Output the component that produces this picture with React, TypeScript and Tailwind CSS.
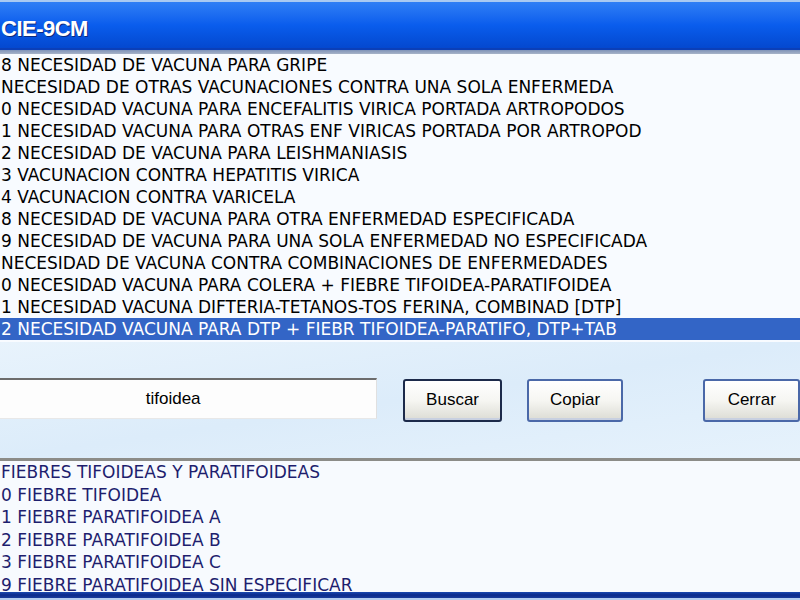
import React from 'react'

const codes = [
  '8 NECESIDAD DE VACUNA PARA GRIPE',
  'NECESIDAD DE OTRAS VACUNACIONES CONTRA UNA SOLA ENFERMEDA',
  '0 NECESIDAD VACUNA PARA ENCEFALITIS VIRICA PORTADA ARTROPODOS',
  '1 NECESIDAD VACUNA PARA OTRAS ENF VIRICAS PORTADA POR ARTROPOD',
  '2 NECESIDAD DE VACUNA PARA LEISHMANIASIS',
  '3 VACUNACION CONTRA HEPATITIS VIRICA',
  '4 VACUNACION CONTRA VARICELA',
  '8 NECESIDAD DE VACUNA PARA OTRA ENFERMEDAD ESPECIFICADA',
  '9 NECESIDAD DE VACUNA PARA UNA SOLA ENFERMEDAD NO ESPECIFICADA',
  'NECESIDAD DE VACUNA CONTRA COMBINACIONES DE ENFERMEDADES',
  '0 NECESIDAD VACUNA PARA COLERA + FIEBRE TIFOIDEA-PARATIFOIDEA',
  '1 NECESIDAD VACUNA DIFTERIA-TETANOS-TOS FERINA, COMBINAD [DTP]',
  '2 NECESIDAD VACUNA PARA DTP + FIEBR TIFOIDEA-PARATIFO, DTP+TAB',
]

const results = [
  'FIEBRES TIFOIDEAS Y PARATIFOIDEAS',
  '0 FIEBRE TIFOIDEA',
  '1 FIEBRE PARATIFOIDEA A',
  '2 FIEBRE PARATIFOIDEA B',
  '3 FIEBRE PARATIFOIDEA C',
  '9 FIEBRE PARATIFOIDEA SIN ESPECIFICAR',
]

function XpButton({ label, focused, className }: { label: string; focused?: boolean; className: string }) {
  return (
    <button
      className={`h-[43px] rounded-[3px] border-2 bg-gradient-to-b from-white via-[#f6f6f2] to-[#dcdcd4] text-[17px] text-black font-['Liberation_Sans',sans-serif] shadow-[inset_0_-2px_0_#c8d0e0] ${
        focused ? 'border-[#1c2a4a]' : 'border-[#4a68a8]'
      } ${className}`}
    >
      {label}
    </button>
  )
}

export default function App() {
  return (
    <div className="w-[800px] h-[600px] overflow-hidden flex flex-col bg-[#e4f0fb] font-['DejaVu_Sans','Liberation_Sans',sans-serif]">
      <div className="h-[2px] bg-[#a9c9f2]" />
      <div className="h-[48px] flex items-center pt-[8px] bg-gradient-to-b from-[#2f7ef5] via-[#0a5ded] to-[#0448cf] border-b-2 border-[#0b3fb8]">
        <span className="pl-[1px] font-['Liberation_Sans',sans-serif] font-bold text-[22px] leading-none tracking-[-0.5px] text-white [text-shadow:1px_1px_0_#0a2a80]">
          CIE-9CM
        </span>
      </div>
      <div className="h-[4px] bg-gradient-to-b from-[#7f93b8] to-[#a7b3c8]" />

      <div className="h-[288px] bg-[#f8fbff] text-[17px] text-black">
        {codes.map((c, i) => (
          <div
            key={i}
            className={`h-[22px] leading-[22px] pl-[1px] whitespace-nowrap ${
              i === codes.length - 1 ? 'bg-[#3365c6] text-white' : ''
            }`}
          >
            {c}
          </div>
        ))}
      </div>

      <div className="h-[116px] flex items-center bg-gradient-to-br from-[#e8f3fc] via-[#dcecfa] to-[#e6f2fc]">
        <div className="flex items-center w-full">
          <div className="w-[379px] h-[41px] -mt-[4px] bg-[#fdfdfd] border-t-2 border-[#6c6c6c] border-r border-b border-r-[#e0e0e0] border-b-[#e8e8e8] flex items-center justify-center text-[17px] font-['Liberation_Sans',sans-serif] text-black">
            <span className="ml-[-30px]">tifoidea</span>
          </div>
          <XpButton label="Buscar" focused className="ml-[26px] w-[99px]" />
          <XpButton label="Copiar" className="ml-[25px] w-[97px]" />
          <XpButton label="Cerrar" className="ml-[80px] w-[97px]" />
        </div>
      </div>

      <div className="h-[3px] bg-[#8c8c88]" />
      <div className="h-[131px] flex flex-col bg-[#f7fafe] text-[17px] text-[#1e1e6e]">
        {results.map((r, i) => (
          <div
            key={i}
            className={`shrink-0 leading-[22.6px] pl-[1px] whitespace-nowrap ${
              i === results.length - 1 ? 'h-[18px]' : 'h-[22.6px]'
            }`}
          >
            {r}
          </div>
        ))}
      </div>
      <div className="h-[6px] bg-gradient-to-b from-[#1a48b0] via-[#0b2a8c] to-[#1a3c9c]" />
      <div className="flex-1 bg-[#b4cdf0]" />
    </div>
  )
}
